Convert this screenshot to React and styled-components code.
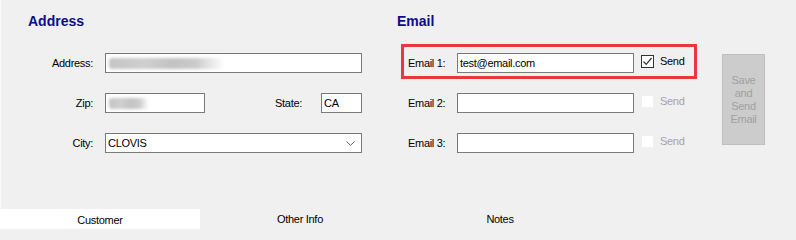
import React from "react";
import styled, { createGlobalStyle } from "styled-components";

const GlobalStyle = createGlobalStyle`
  html, body { margin: 0; padding: 0; background: #f0f0f0; }
  body {
    font-family: "Liberation Sans", Arial, sans-serif;
    font-size: 11px;
    letter-spacing: -0.3px;
    color: #000;
  }
  * { box-sizing: border-box; }
`;

const Page = styled.div`
  width: 796px;
  height: 240px;
  display: flex;
  flex-direction: column;
  background: #f0f0f0;
  overflow: hidden;
`;

const Content = styled.div`
  height: 209px;
  display: flex;
  padding: 13px 0 0 27px;
  border-left: 1px solid #fbfbfb;
`;

const Section = styled.section`
  display: flex;
  flex-direction: column;
  width: ${(p) => p.$width || "auto"};
`;

const Heading = styled.h2`
  margin: 0;
  font-size: 14px;
  line-height: 16px;
  font-weight: bold;
  letter-spacing: 0;
  color: #0c0c88;
`;

const FieldGrid = styled.div`
  margin-top: 24px;
  display: grid;
  grid-template-columns: 65px 257px;
  column-gap: 12px;
  row-gap: 20px;
  align-items: center;
`;

const Label = styled.label`
  text-align: ${(p) => (p.$align === "left" ? "left" : "right")};
  line-height: 13px;
  white-space: nowrap;
  color: ${(p) => (p.$disabled ? "#a3a3a3" : "#000")};
  width: ${(p) => p.$width || "auto"};
  flex: none;
`;

const TextBox = styled.div`
  position: relative;
  height: 20px;
  width: ${(p) => p.$width || "100%"};
  flex: none;
  background: #fff;
  border: 1px solid #7a7a7a;
  padding-left: 2px;
  line-height: 18px;
  white-space: nowrap;
  overflow: hidden;
  display: flex;
  align-items: center;
`;

const Blur = styled.span`
  display: block;
  height: 11px;
  width: ${(p) => p.$width}px;
  margin-left: 1px;
  border-radius: 3px;
  background: linear-gradient(
    90deg,
    #c4c4c4 0%,
    #cfcfcf 30%,
    #c2c2c2 55%,
    #cbcbcb 75%,
    rgba(220, 220, 220, 0) 100%
  );
  filter: blur(1.5px);
`;

const InlineRow = styled.div`
  display: flex;
  align-items: center;
  justify-content: space-between;
`;

const Group = styled.div`
  display: flex;
  align-items: center;
  gap: ${(p) => p.$gap || 0}px;
`;

const Combo = styled(TextBox)`
  padding-right: 6px;
  justify-content: space-between;
`;

const EmailBody = styled.div`
  margin-top: 15px;
  display: flex;
  align-items: flex-start;
`;

const EmailRows = styled.div`
  margin-left: 4px;
  display: flex;
  flex-direction: column;
  gap: 5px;
`;

const EmailRow = styled.div`
  width: 296px;
  height: 35px;
  display: flex;
  align-items: flex-start;
  padding: 6px 0 3px 4px;
  border: 3px solid ${(p) => (p.$highlight ? "#e8383d" : "transparent")};
  > label { align-self: center; }
`;

const CheckGroup = styled.div`
  display: flex;
  align-items: center;
  margin-left: 7px;
  margin-top: 2px;
  height: 13px;
  gap: 6px;
`;

const CheckBox = styled.span`
  width: 13px;
  height: 13px;
  flex: none;
  background: #fff;
  background-clip: padding-box;
  border: 1px solid ${(p) => (p.$disabled ? "transparent" : "#333")};
  display: flex;
  align-items: center;
  justify-content: center;
`;

const ActionButton = styled.button`
  margin: 10px 0 0 25px;
  width: 43px;
  height: 91px;
  background: #cccccc;
  border: 1px solid #bfbfbf;
  color: #a0a0a0;
  font: inherit;
  letter-spacing: -0.3px;
  line-height: 13px;
  padding: 0;
  text-align: center;
`;

const TabBar = styled.div`
  height: 20px;
  display: flex;
`;

const Tab = styled.div`
  width: 200px;
  height: 20px;
  text-align: center;
  background: ${(p) => (p.$active ? "#fff" : "transparent")};
  line-height: ${(p) => (p.$active ? "22px" : "20px")};
`;

const Check = () => (
  <svg width="11" height="11" viewBox="0 0 11 11">
    <path d="M1.5 5.5 L4.2 8.3 L9.6 2" fill="none" stroke="#333" strokeWidth="1.2" />
  </svg>
);

const Chevron = () => (
  <svg width="9" height="5" viewBox="0 0 9 5">
    <path d="M0.5 0.5 L4.5 4.3 L8.5 0.5" fill="none" stroke="#606060" strokeWidth="1" />
  </svg>
);

const emails = [
  { label: "Email 1:", value: "test@email.com", checked: true },
  { label: "Email 2:", value: "", checked: false },
  { label: "Email 3:", value: "", checked: false },
];

export default function App() {
  return (
    <>
      <GlobalStyle />
      <Page>
        <Content>
          <Section $width="369px">
            <Heading>Address</Heading>
            <FieldGrid>
              <Label>Address:</Label>
              <TextBox>
                <Blur $width={116} />
              </TextBox>
              <Label>Zip:</Label>
              <InlineRow>
                <TextBox $width="100px">
                  <Blur $width={40} />
                </TextBox>
                <Group $gap={19}>
                  <Label>State:</Label>
                  <TextBox $width="41px">CA</TextBox>
                </Group>
              </InlineRow>
              <Label>City:</Label>
              <Combo>
                <span>CLOVIS</span>
                <Chevron />
              </Combo>
            </FieldGrid>
          </Section>
          <Section>
            <Heading>Email</Heading>
            <EmailBody>
              <EmailRows>
                {emails.map((e) => (
                  <EmailRow key={e.label} $highlight={e.checked}>
                    <Label $align="left" $width="49px">
                      {e.label}
                    </Label>
                    <TextBox $width="177px">{e.value}</TextBox>
                    <CheckGroup>
                      <CheckBox $disabled={!e.checked}>{e.checked && <Check />}</CheckBox>
                      <Label $align="left" $disabled={!e.checked}>
                        Send
                      </Label>
                    </CheckGroup>
                  </EmailRow>
                ))}
              </EmailRows>
              <ActionButton disabled>
                Save
                <br />
                and
                <br />
                Send
                <br />
                Email
              </ActionButton>
            </EmailBody>
          </Section>
        </Content>
        <TabBar>
          <Tab $active>Customer</Tab>
          <Tab>Other Info</Tab>
          <Tab>Notes</Tab>
        </TabBar>
      </Page>
    </>
  );
}
